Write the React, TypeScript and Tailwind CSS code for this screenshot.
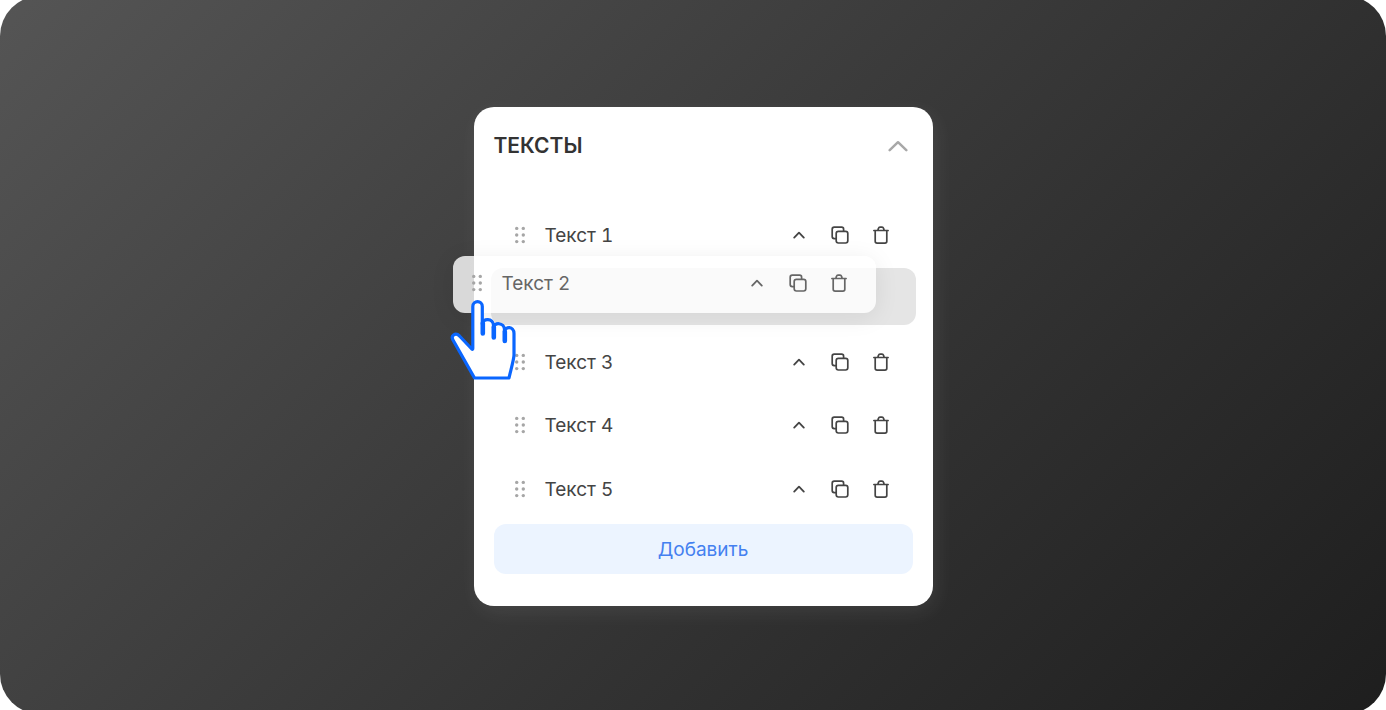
import React from "react";

function Grip() {
  return (
    <svg width="12" height="18" viewBox="0 0 12 18" fill="#a6a6a6" aria-hidden="true">
      {[2.7, 9.3].map((x) => [2.4, 9, 15.6].map((y) => <circle key={`${x}-${y}`} cx={x} cy={y} r="1.7" />))}
    </svg>
  );
}

function ChevronUp() {
  return (
    <svg width="12" height="8" viewBox="0 0 12 8" fill="none" stroke="currentColor" strokeWidth="1.8" strokeLinecap="round" strokeLinejoin="round" aria-hidden="true">
      <path d="M1.2 6.6 6 1.6l4.800 5" />
    </svg>
  );
}

function CopyIcon() {
  return (
    <svg width="18" height="18" viewBox="0 0 18 18" fill="none" stroke="currentColor" strokeWidth="1.7" strokeLinecap="round" strokeLinejoin="round" aria-hidden="true">
      <rect x="5.2" y="5.400" width="11.600" height="11.600" rx="2.200" />
      <path d="M5 12.600H3.200A2 2 0 0 1 1.200 10.600V3.200A2 2 0 0 1 3.200 1.200h7.400A2 2 0 0 1 12.600 3.200v2" />
    </svg>
  );
}

function TrashIcon() {
  return (
    <svg width="16" height="18" viewBox="0 0 16 18" fill="none" stroke="currentColor" strokeWidth="1.7" strokeLinecap="round" strokeLinejoin="round" aria-hidden="true">
      <path d="M.9 4.500h14.200M2.200 4.700v10.500c0 1.200.7 1.900 1.900 1.900h7.800c1.200 0 1.900-.7 1.900-1.900V4.700M4.900 4.300l.5-1.900c.3-.9.800-1.300 1.600-1.300h2c.8 0 1.300.4 1.600 1.300l.5 1.900" />
    </svg>
  );
}

function RowContent({ label }: { label: string }) {
  return (
    <>
      <button type="button" aria-label={`Переместить ${label}`} className="cursor-grab">
        <Grip />
      </button>
      <span className="ml-[19px] flex-1 pt-0.5 text-[19px] leading-6 tabular-nums">{label}</span>
      <div className="flex items-center">
        <button type="button" aria-label={`Развернуть ${label}`} className="flex h-6 w-[41px] items-center justify-center">
          <ChevronUp />
        </button>
        <button type="button" aria-label={`Копировать ${label}`} className="flex h-6 w-[41px] items-center justify-center">
          <CopyIcon />
        </button>
        <button type="button" aria-label={`Удалить ${label}`} className="flex h-6 w-[41px] items-center justify-center">
          <TrashIcon />
        </button>
      </div>
    </>
  );
}

function HandCursor() {
  return (
    <svg width="68" height="82" viewBox="0 0 68 82" className="pointer-events-none absolute top-[43px] -left-1" fill="#fff" stroke="#0a66ff" strokeWidth="3.2" strokeLinejoin="round" strokeLinecap="round" aria-hidden="true">
      <path d="M25.500 79 L4 41 C1.500 36.500 6.500 33 10.500 37 L22.800 50 C23.400 50.500 23.800 50.500 23.800 49.500 V7.500 C23.800 1 33.300 1 33.300 7.500 V25 C33.300 19 44.500 19 44.500 26.500 V29 C44.500 23 55.500 23 55.500 31 V33 C56 27 65 27 65 34.500 V56 C65 60 61.500 72 60 79 Z" />
      <path d="M33.800 24V34.500M44.800 28V38.500M55.800 32.500V42" fill="none" strokeWidth="4.600" />
    </svg>
  );
}

const items = ["Текст 1", "Текст 2", "Текст 3", "Текст 4", "Текст 5"];
const dragged = "Текст 2";

export default function App() {
  return (
    <main className="flex h-screen min-h-[620px] flex-col overflow-hidden bg-white font-['Inter',sans-serif]">
      <div className="-my-1 flex flex-1 items-center justify-center rounded-[40px] bg-linear-135 from-[#555555] to-[#1e1e1e] pt-[3px] pl-5">
        <section className="w-full max-w-[459px] rounded-[20px] bg-white px-5 pb-8 shadow-[3px_6px_20px_rgba(255,255,255,0.08)]">
          <header className="flex h-[78px] items-center justify-between">
            <h1 className="text-[21px] leading-7 font-semibold text-[#333333]">ТЕКСТЫ</h1>
            <button type="button" aria-label="Свернуть" className="mr-[5px] text-[#a8a8a8]">
              <svg width="20" height="12" viewBox="0 0 20 12" fill="none" stroke="currentColor" strokeWidth="2.500" strokeLinecap="round" strokeLinejoin="round" aria-hidden="true">
                <path d="M1.700 10.200 10 2.200l8.300 8" />
              </svg>
            </button>
          </header>
          <ul className="-mx-[3px] mt-[21px] flex h-[311px] flex-col justify-between text-[#444444]">
            {items.map((label) =>
              label === dragged ? (
                <li key={label} className="relative z-10 -mt-0.5 mb-0.5 h-[57px] rounded-xl bg-[#e5e5e5]">
                  <div className="absolute -top-3 right-10 -left-[38px] flex h-[57px] items-center rounded-xl bg-white/80 pr-4 pb-[3px] pl-[18px] text-[#666666] shadow-[0_4px_24px_rgba(0,0,0,0.08)]">
                    <RowContent label={label} />
                    <HandCursor />
                  </div>
                </li>
              ) : (
                <li key={label} className="flex h-[57px] items-center pr-[14px] pl-[23px]">
                  <RowContent label={label} />
                </li>
              ),
            )}
          </ul>
          <button type="button" className="mt-[7px] h-[50px] w-full rounded-xl bg-[#ecf4ff] pt-0.5 text-[19px] leading-6 text-[#4480f0]">
            Добавить
          </button>
        </section>
      </div>
    </main>
  );
}
